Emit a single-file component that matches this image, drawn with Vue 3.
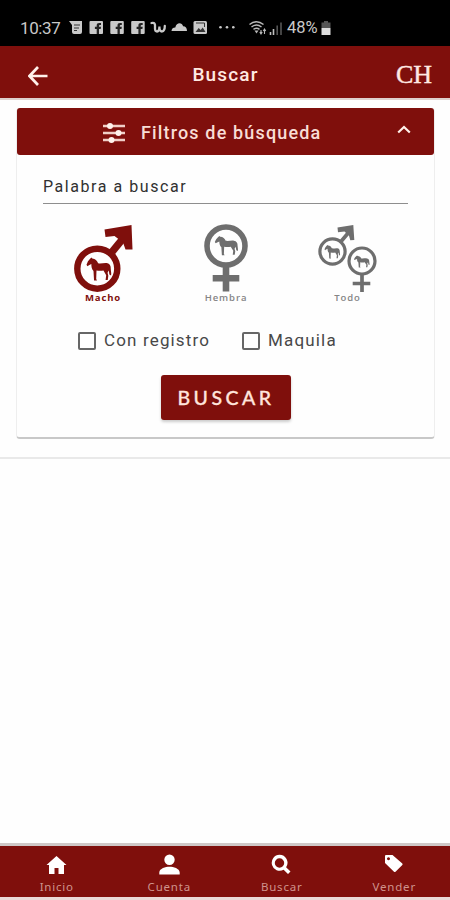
<template>
  <div class="screen">
    <div class="status-bar">
      <span class="clock">10:37</span>
      <svg class="notifications" viewBox="66 16 172 24" width="172" height="24">
        <g fill="#c9c9c9">
          <path d="M69 21h13v11q0 2-2 2h-6q-2 0-2-2v-7z" />
          <path d="M74 25h6M74 28h5M74 30.5h3" stroke="#333" stroke-width="1.1" />
          <g v-for="x in [89.5, 110.3, 131.2]" :key="x" :transform="`translate(${x} 21)`">
            <rect width="13.5" height="13" rx="1" />
            <path d="M7.2 13V8H5.4V5.7h1.8V4.4Q7.2 2 9.8 2h1.7v2.1h-1.2q-.8 0-.8.8v.8h2L11.2 8H9.5v5z" fill="#222" />
          </g>
          <path d="M151.5 23q3-.8 3.5 2v4q.2 2.5 2 2.5 2.4-.2 2.4-5 0 5 2.6 5 2.800-.6 2.800-5.500" fill="none" stroke="#c9c9c9" stroke-width="2.300" stroke-linecap="round" />
          <path d="M171.500 31c.2-2.500 1.800-3.600 3.800-3.500 1.200-5.500 6.800-5.300 7.800-1.200 2.500 0 3.900 2 3.900 4.700z" />
          <rect x="193.500" y="21" width="13.500" height="13" rx="1.500" />
          <path d="M195.500 32l3.200-4 2 2 2-2.500 2.800 4.500z" fill="#333" />
          <path d="M196 23h8.500v4" fill="none" stroke="#333" stroke-width="1" />
          <circle cx="220.500" cy="27.300" r="1.300" /><circle cx="227" cy="27.300" r="1.300" /><circle cx="233.300" cy="27.300" r="1.300" />
        </g>
      </svg>
      <svg class="signal" viewBox="248 18 36 18" width="36" height="18">
        <g fill="none" stroke="#b9b9b9" stroke-width="1.500">
          <path d="M249.500 23.500q7-5.500 14 0M251.500 26q5-4 10 0M253.500 28.300q3-2.200 6 0" />
          <path d="M254.500 29.500h4l-2 3z" fill="#b9b9b9" stroke="none" />
          <path d="M261 33v-4M264.500 28v5M259.800 31l1.200 2 1.200-2M263.300 30l1.200-2 1.200 2" stroke-width="1.100" />
        </g>
        <path d="M270.500 34v-3M273.500 34v-6" stroke="#c0c0c0" stroke-width="1.600" />
        <path d="M277.200 34v-9.500M281 34V21.500" stroke="#555" stroke-width="1.600" />
      </svg>
      <span class="percent">48%</span>
      <svg class="battery" viewBox="0 0 10 14" width="10" height="14">
        <path d="M3 0h4v1.500h2.500V7h-9V1.500H3z" fill="#565656" />
        <path d="M.5 7h9v7h-9z" fill="#dedede" />
      </svg>
    </div>

    <header class="app-header">
      <svg class="back" viewBox="0 0 20 20" width="20" height="20">
        <path d="M10 1L1.500 10l8.500 9M2 10h17.500" fill="none" stroke="#fff0ea" stroke-width="2.700" />
      </svg>
      <h1>Buscar</h1>
      <span class="brand">CH</span>
    </header>

    <main>
      <section class="filters">
        <div class="filters-header">
          <svg class="sliders" viewBox="0 0 22 20" width="22" height="20">
            <path d="M0 3h22M0 10h22M0 17h22" stroke="#f0cfc8" stroke-width="2.400" />
            <g fill="#fff2ec">
              <circle cx="7" cy="3" r="3" /><circle cx="15.500" cy="10" r="3" /><circle cx="8.500" cy="17" r="3" />
            </g>
          </svg>
          <span>Filtros de búsqueda</span>
          <svg class="chevron" viewBox="0 0 14 9" width="14" height="9">
            <path d="M1.200 7.500L7 2l5.800 5.500" fill="none" stroke="#fff0ea" stroke-width="2.200" />
          </svg>
        </div>

        <div class="filters-body">
          <input v-model="keyword" type="text" placeholder="Palabra a buscar" />

          <div class="genders">
            <button type="button" :class="['gender', 'male', { active: gender === 'macho' }]" @click="gender = 'macho'">
              <svg viewBox="72 223 62 69" width="62" height="69">
                <circle cx="97.300" cy="268.700" r="20" fill="none" stroke="currentColor" stroke-width="6.400" />
                <path d="M112 252L123 238.500" stroke="currentColor" stroke-width="7.500" />
                <path d="M104.500 229.500L131.500 225l1 24.500h-7l-2.500-7-8.500-6.500-9 1z" fill="currentColor" />
                <path :d="horse" transform="translate(86.500 257.500) scale(.97 .96)" fill="currentColor" />
              </svg>
              <span>Macho</span>
            </button>
            <button type="button" :class="['gender', 'female', { active: gender === 'hembra' }]" @click="gender = 'hembra'">
              <svg viewBox="201 223 50 69" width="50" height="69">
                <circle cx="226" cy="246" r="19" fill="none" stroke="currentColor" stroke-width="5.600" />
                <path d="M226 267v24.500M212.700 278.300h26.600" stroke="currentColor" stroke-width="6.600" />
                <path :d="horse" transform="translate(214.800 236) scale(.91 .8)" fill="currentColor" />
              </svg>
              <span>Hembra</span>
            </button>
            <button type="button" :class="['gender', 'all', { active: gender === 'todo' }]" @click="gender = 'todo'">
              <svg viewBox="316 223 63 69" width="63" height="69">
                <g fill="none" stroke="currentColor" stroke-width="3.200">
                  <circle cx="332.500" cy="251.500" r="12.600" />
                  <circle cx="362" cy="261" r="13" />
                  <path d="M341 241.500l8-9.500M362 274v18M352.700 283.500h17.600" stroke-width="3.700" />
                </g>
                <path d="M337.500 227.500L353.300 225l1 15-4 .3-1.300-4.500-4.500-4.200-6.500.6z" fill="currentColor" />
                <path :d="horse" transform="translate(324.500 245) scale(.61 .56)" fill="currentColor" />
                <path :d="horse" transform="translate(354 255.500) scale(.61 .5)" fill="currentColor" />
              </svg>
              <span>Todo</span>
            </button>
          </div>

          <div class="checks">
            <label><input v-model="registered" type="checkbox" /><span>Con registro</span></label>
            <label><input v-model="maquila" type="checkbox" /><span>Maquila</span></label>
          </div>

          <button type="button" class="submit">BUSCAR</button>
        </div>
      </section>
    </main>

    <nav class="tab-bar">
      <a v-for="tab in tabs" :key="tab.label">
        <svg viewBox="0 0 22 22" width="22" height="22">
          <path :d="tab.icon" fill="#fff" fill-rule="evenodd" />
        </svg>
        <span>{{ tab.label }}</span>
      </a>
    </nav>
  </div>
</template>

<script setup>
import { ref } from 'vue'

const keyword = ref('')
const gender = ref('macho')
const registered = ref(false)
const maquila = ref(false)

// silueta del caballo, 26 x 24
const horse = 'M0 7.500L1.500 4 3.500 1.500 5 0l1 1C9 1 11 3.500 12 6c3 .6 6-.6 9-.2 3 .5 4.200 3 4 6 .1 3 .9 4.500.3 7l-1.700-1-.6-4.300-1.300 2.500.8 3-.6 4.500h-2.200l.6-5-2.800-5c-2.500.6-5 .4-7.200 0L10 22.500l.8 1.500H7.800L7.200 14C5.300 12 5 9.500 5 6.800L2.500 8 1 9.200z'

const tabs = [
  { label: 'Inicio', icon: 'M11.500 2L21.500 11H19V20H13.500V14H9.500V20H4V11H1.500z' },
  { label: 'Cuenta', icon: 'M11.500 .5a5.200 5.200 0 1 1 0 10.400A5.200 5.200 0 0 1 11.500 .5zM1.300 20.500V18.500C1.500 14.500 7.500 12.800 11.500 12.800S21.500 14.500 21.700 18.500V20.500z' },
  { label: 'Buscar', icon: 'M9.500.8a8 8 0 0 1 6.600 12.500L20.500 17.500 18 20 13.600 15.800A8 8 0 1 1 9.500.8zM9.500 4.300a4.700 4.700 0 1 0 0 9.400 4.700 4.700 0 0 0 0-9.400z' },
  { label: 'Vender', icon: 'M2 2Q2 1 3 1H9.500L19.300 9.500Q20 10.300 19.300 11L12.500 17.700Q11.700 18.400 11 17.700L2 9zM5.500 3.300a1.500 1.500 0 1 0 .01 0z' }
]
</script>

<style>
body {
  margin: 0;
  background: #fff;
}
</style>

<style scoped>
.screen {
  width: 450px;
  height: 900px;
  display: flex;
  flex-direction: column;
  overflow: hidden;
  background: #fefefe;
  font-family: Roboto, sans-serif;
}

button {
  border: 0;
  padding: 0;
  background: none;
  font-family: inherit;
}

/* barra de estado */
.status-bar {
  height: 46px;
  flex: none;
  box-sizing: border-box;
  padding: 10px 0 0 20px;
  display: flex;
  align-items: center;
  background: #000;
  color: #c9c9c9;
}

.clock {
  width: 46px;
  font-size: 17px;
  line-height: 20px;
  letter-spacing: -0.4px;
}

.signal {
  margin-left: 10px;
}

.percent {
  width: 34px;
  margin-left: 3px;
  font-size: 16.5px;
  line-height: 20px;
}

/* cabecera */
.app-header {
  height: 52px;
  flex: none;
  display: grid;
  grid-template-columns: 100px 1fr 100px;
  align-items: center;
  background: #7f0f0c;
  border-bottom: 2px solid #ddd0ce;
  color: #ffe9e2;
}

.back {
  margin: 7px 0 0 28px;
}

h1 {
  margin: 5px 0 0 1px;
  text-align: center;
  font-size: 19px;
  font-weight: 500;
  letter-spacing: 1.15px;
}

.brand {
  margin: 5px 18px 0 0;
  text-align: right;
  font-family: "Liberation Serif", serif;
  font-size: 26px;
  -webkit-text-stroke: 0.4px #ffe9e2;
}

/* filtros */
main {
  flex: none;
  height: 349px;
  padding: 8px 15px 0 16px;
  border-bottom: 2px solid #e9e9e9;
}

.filters {
  height: 331px;
  box-sizing: border-box;
  border: 1px solid #eee;
  border-top: 0;
  border-bottom: 2px solid #c8c8c8;
  border-radius: 4px;
}

.filters-header {
  height: 47px;
  box-sizing: border-box;
  padding: 0 23px 0 86px;
  display: flex;
  align-items: center;
  border-radius: 3px;
  background: #7f0f0c;
  color: #f8ddd5;
  font-size: 18px;
  font-weight: 500;
  letter-spacing: 1.15px;
}

.sliders {
  margin-top: 2px;
}

.filters-header span {
  margin: 2px 0 0 16px;
}

.chevron {
  margin: -5px 0 0 auto;
}

.filters-body {
  padding: 14px 26px 0;
  display: flex;
  flex-direction: column;
}

.filters-body input[type="text"] {
  height: 35px;
  box-sizing: border-box;
  padding: 0;
  border: 0;
  border-bottom: 1px solid #8e8e8e;
  outline: 0;
  background: none;
  font-family: inherit;
  font-size: 16px;
  letter-spacing: 1.55px;
}

.filters-body input::placeholder {
  color: #303030;
  opacity: 1;
}

.genders {
  height: 83px;
  margin-top: 19px;
  display: flex;
  align-items: flex-start;
  padding-left: 29px;
}

.gender {
  display: flex;
  flex-direction: column;
  align-items: center;
  color: #6e6e6e;
  font-family: "Open Sans", sans-serif;
  font-size: 9.5px;
  font-weight: 600;
  line-height: 12px;
  letter-spacing: 0.9px;
}

.gender span {
  color: #858585;
}

.active,
.active span {
  color: #7f0f0c;
  font-weight: 700;
}

.female {
  margin-left: 67px;
}

.all {
  margin-left: 65px;
}

.checks {
  display: flex;
  gap: 32px;
  margin: 23px 0 0 35px;
}

.checks label {
  display: flex;
  align-items: center;
  height: 22px;
  font-size: 17px;
  letter-spacing: 1.15px;
  color: #484848;
}

.checks input {
  appearance: none;
  width: 18px;
  height: 18px;
  margin: 1px 8px 0 0;
  border: 2px solid #666;
  border-radius: 2px;
}

.submit {
  width: 130px;
  height: 45px;
  margin: 24px 0 0 118px;
  border-radius: 3px;
  background: #7f0f0c;
  box-shadow: 0 2px 3px rgba(0, 0, 0, 0.2);
  color: #ffe4dc;
  font-family: Lato, sans-serif;
  font-size: 19.5px;
  font-weight: 500;
  line-height: 41px;
  letter-spacing: 3.5px;
  text-indent: 0;
  -webkit-text-stroke: 0.3px #ffe4dc;
}

/* navegación inferior */
.tab-bar {
  height: 51px;
  flex: none;
  margin-top: auto;
  display: grid;
  grid-template-columns: repeat(4, 1fr);
  border-top: 3px solid #cfc8c7;
  border-bottom: 3px solid #ead9d7;
  background: #7f0f0c;
}

.tab-bar a {
  padding-top: 8px;
  display: flex;
  flex-direction: column;
  align-items: center;
  color: #cf938c;
  font-family: "Noto Sans", sans-serif;
  font-size: 11.5px;
  line-height: 16px;
  letter-spacing: 0.8px;
}

.tab-bar span {
  margin: 3px 0 0 1px;
}
</style>
